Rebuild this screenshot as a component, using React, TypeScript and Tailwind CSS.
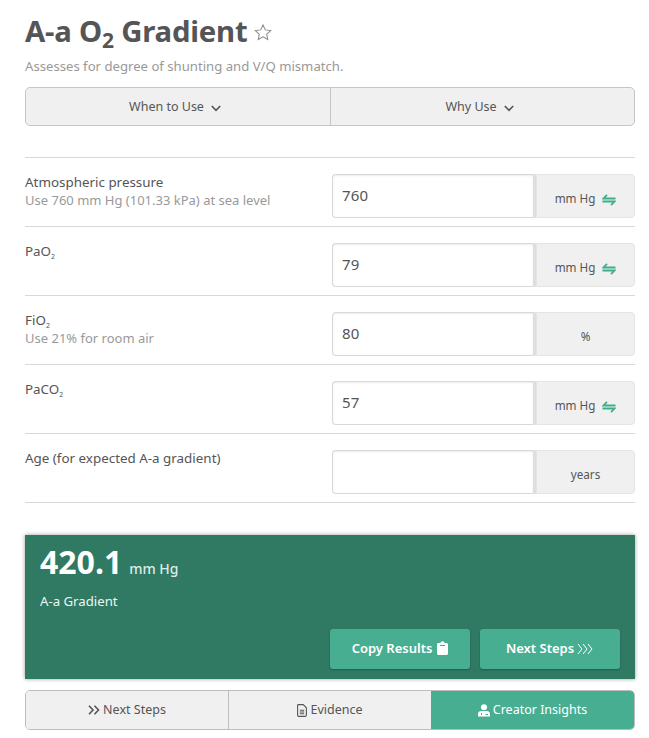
import React from "react";

const font = { fontFamily: '"Noto Sans", sans-serif' };

function Swap() {
  return (
    <svg width="14" height="12" viewBox="0 0 14 12" fill="none" stroke="#3fae8e" strokeWidth="1.8" className="ml-[7px] mt-[2px] shrink-0">
      <path d="M13.5 4.5H1.5L5 0.8" />
      <path d="M0.5 7.5H12.5L9 11.2" />
    </svg>
  );
}

function Chevron() {
  return (
    <svg width="10" height="7" viewBox="0 0 10 7" fill="none" stroke="#555" strokeWidth="1.6" className="ml-[7px] mt-[2px]">
      <path d="M0.8 1L5 5.4L9.2 1" />
    </svg>
  );
}

function Sub2() {
  return <span className="text-[7px] relative top-[3px] leading-none">2</span>;
}

function Row({ label, hint, value, unit, swap }: { label: React.ReactNode; hint?: string; value: string; unit: string; swap?: boolean }) {
  return (
    <div className="flex border-b border-[#d8d8d8] h-[69px]">
      <div className="w-[307px] pt-[15px]">
        <div className="text-[13.4px] leading-[18px] text-[#555]">{label}</div>
        <div className="text-[13px] leading-[19px] text-[#999]">{hint}</div>
      </div>
      <div className="flex h-[44px] mt-[16px] w-[303px]">
        <div className="w-[204px] h-full bg-white border border-[#d8d8d8] border-r-[3px] border-r-[#dedede] rounded-l-[4px] shadow-[inset_0_1px_2px_rgba(0,0,0,0.08)] pl-[9px] flex items-center text-[15px] text-[#555] tracking-[0.2px] pb-[1px]">
          {value}
        </div>
        <div className="flex-1 h-full bg-[#f0f0f0] border border-[#e4e4e4] rounded-r-[4px] flex items-center justify-center text-[11.7px] text-[#555] pt-[6px]">
          {unit}
          {swap && <Swap />}
        </div>
      </div>
    </div>
  );
}

export default function App() {
  return (
    <div style={font} className="w-[649px] h-[738px] overflow-hidden bg-white pl-[25px] pr-[14px] pt-[12px]">
      <div className="flex items-center h-[40px]">
        <h1 className="text-[29.3px] font-bold text-[#555] leading-[40px] tracking-[-0.2px]">
          A-a O<span className="text-[21px] relative top-[6px]">2</span> Gradient
        </h1>
        <svg width="20" height="19" viewBox="0 0 24 24" fill="none" stroke="#8a8a8a" strokeWidth="1.3" className="ml-[6px]">
          <path d="M12 2.5l2.9 6.2 6.8.8-5 4.6 1.3 6.7-6-3.4-6 3.4 1.3-6.7-5-4.6 6.8-.8z" />
        </svg>
      </div>
      <p className="text-[13.15px] leading-[18px] text-[#999] mt-[5px]">Assesses for degree of shunting and V/Q mismatch.</p>

      <div className="flex h-[39px] mt-[12px] bg-[#f0f0f0] border border-[#c6c6c6] rounded-[5px] text-[12.5px] text-[#555]">
        <div className="w-[305px] border-r border-[#c6c6c6] flex items-center justify-center pr-[6px] pt-[2px]">When to Use<Chevron /></div>
        <div className="flex-1 flex items-center justify-center pr-[6px] pt-[2px]">Why Use<Chevron /></div>
      </div>

      <div className="mt-[31px] border-t border-[#d8d8d8]">
        <Row label="Atmospheric pressure" hint="Use 760 mm Hg (101.33 kPa) at sea level" value="760" unit="mm Hg" swap />
        <Row label={<>PaO<Sub2 /></>} value="79" unit="mm Hg" swap />
        <Row label={<>FiO<Sub2 /></>} hint="Use 21% for room air" value="80" unit="%" />
        <Row label={<>PaCO<Sub2 /></>} value="57" unit="mm Hg" swap />
        <Row label="Age (for expected A-a gradient)" value="" unit="years" />
      </div>

      <div className="mt-[32px] h-[144px] bg-[#307a64] shadow-[0_0_4px_rgba(0,0,0,0.4)] px-[15px] flex flex-col">
        <div className="flex items-baseline text-white mt-[7px] h-[40px]">
          <span className="text-[32px] font-bold leading-[40px]">420.1</span>
          <span className="text-[14px] ml-[7px] text-[#dfeae6] font-medium">mm Hg</span>
        </div>
        <div className="text-[13.2px] leading-[18px] text-[#eef5f2] mt-[10px]">A-a Gradient</div>
        <div className="flex justify-end gap-[10px] mt-[19px] text-[13px] font-semibold text-white">
          <div className="w-[140px] h-[40px] bg-[#48ae92] rounded-[3px] shadow-[0_1px_2px_rgba(0,0,0,0.25)] flex items-center justify-center">
            Copy Results
            <svg width="11" height="14" viewBox="0 0 11 14" fill="white" className="ml-[5px] mb-[2px]">
              <path fillRule="evenodd" d="M1.5 2H3.5C3.5 1 4.3 0.3 5.5 0.3S7.5 1 7.5 2H9.5C10.3 2 11 2.7 11 3.5V12.5C11 13.3 10.3 14 9.5 14H1.5C0.7 14 0 13.3 0 12.5V3.5C0 2.7 0.7 2 1.5 2ZM3 4V5H8V4Z" />
            </svg>
          </div>
          <div className="w-[140px] h-[40px] bg-[#48ae92] rounded-[3px] shadow-[0_1px_2px_rgba(0,0,0,0.25)] flex items-center justify-center">
            Next Steps
            <svg width="17" height="12" viewBox="0 0 17 12" fill="none" stroke="white" strokeWidth="1" className="ml-[3px]">
              <path d="M1 1L5 6L1 11M6 1L10 6L6 11M11 1L15 6L11 11" />
            </svg>
          </div>
        </div>
      </div>

      <div className="flex h-[40px] mt-[11px] w-[610px] border border-[#bdbdbd] rounded-[5px] overflow-hidden text-[12.5px] text-[#555]">
        <div className="w-[203px] bg-[#f0f0f0] border-r border-[#bdbdbd] flex items-center justify-center">
          <svg width="12" height="10" viewBox="0 0 12 10" fill="none" stroke="#555" strokeWidth="1.6" className="mr-[3px]">
            <path d="M1 0.8L5 5L1 9.2M6.5 0.8L10.5 5L6.5 9.2" />
          </svg>
          Next Steps
        </div>
        <div className="w-[202px] bg-[#f0f0f0] flex items-center justify-center">
          <svg width="10" height="13" viewBox="0 0 10 13" fill="none" stroke="#555" strokeWidth="1.1" className="mr-[3px]">
            <path d="M1.5 0.6H6.2L9.4 3.8V11C9.4 11.8 8.8 12.4 8 12.4H2C1.2 12.4 0.6 11.8 0.6 11V1.5C0.6 1 1 0.6 1.5 0.6Z M2.8 6.2H7.2 M2.8 8H7.2 M2.8 9.8H7.2" />
          </svg>
          Evidence
        </div>
        <div className="flex-1 bg-[#48ae92] text-white flex items-center justify-center">
          <svg width="12" height="13" viewBox="0 0 12 13" fill="white" className="mr-[3px]">
            <circle cx="6" cy="3.2" r="3" />
            <path fillRule="evenodd" d="M0 12.5V10C0 8.3 1.5 7 3.2 7H8.8C10.5 7 12 8.3 12 10V12.5ZM3 9V11H4V9ZM7.5 10V11H10V10Z" />
          </svg>
          Creator Insights
        </div>
      </div>
    </div>
  );
}
